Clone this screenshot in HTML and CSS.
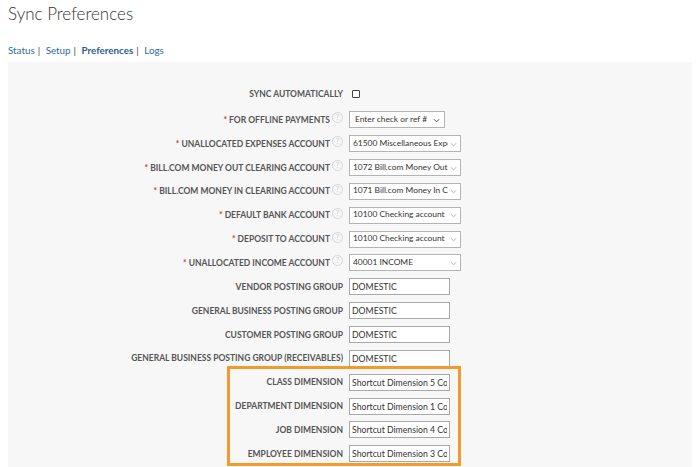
FILE: index.html
```html
<!DOCTYPE html>
<html>
<head>
<meta charset="utf-8">
<link rel="stylesheet" href="styles.css">
</head>
<body>
<h1 class="title">Sync Preferences</h1>
<nav class="tabs">
  <a href="#">Status</a><span class="sep">|</span>
  <a href="#">Setup</a><span class="sep">|</span>
  <a href="#" class="active">Preferences</a><span class="sep">|</span>
  <a href="#">Logs</a>
</nav>
<div class="panel">
  <div class="row first">
    <label class="lbl">SYNC AUTOMATICALLY</label>
    <div class="ctl"><input type="checkbox" class="check"></div>
  </div>
  <div class="row">
    <label class="lbl"><span class="req">*</span>FOR OFFLINE PAYMENTS<span class="help">?</span></label>
    <div class="ctl"><span class="sel narrow"><select><option>Enter check or ref #</option></select><svg class="chev dark" viewBox="0 0 8 5"><path d="M1 1l3 3 3-3" fill="none" stroke="currentColor" stroke-width="1"/></svg></span></div>
  </div>
  <div class="row">
    <label class="lbl"><span class="req">*</span>UNALLOCATED EXPENSES ACCOUNT<span class="help">?</span></label>
    <div class="ctl"><span class="sel"><select><option>61500 Miscellaneous Expenses</option></select><svg class="chev" viewBox="0 0 8 5"><path d="M1 1l3 3 3-3" fill="none" stroke="currentColor" stroke-width="1"/></svg></span></div>
  </div>
  <div class="row">
    <label class="lbl"><span class="req">*</span>BILL.COM MONEY OUT CLEARING ACCOUNT<span class="help">?</span></label>
    <div class="ctl"><span class="sel"><select><option>1072 Bill.com Money Out Clearing</option></select><svg class="chev" viewBox="0 0 8 5"><path d="M1 1l3 3 3-3" fill="none" stroke="currentColor" stroke-width="1"/></svg></span></div>
  </div>
  <div class="row">
    <label class="lbl"><span class="req">*</span>BILL.COM MONEY IN CLEARING ACCOUNT<span class="help">?</span></label>
    <div class="ctl"><span class="sel"><select><option>1071 Bill.com Money In Clearing</option></select><svg class="chev" viewBox="0 0 8 5"><path d="M1 1l3 3 3-3" fill="none" stroke="currentColor" stroke-width="1"/></svg></span></div>
  </div>
  <div class="row">
    <label class="lbl"><span class="req">*</span>DEFAULT BANK ACCOUNT<span class="help">?</span></label>
    <div class="ctl"><span class="sel"><select><option>10100 Checking account</option></select><svg class="chev" viewBox="0 0 8 5"><path d="M1 1l3 3 3-3" fill="none" stroke="currentColor" stroke-width="1"/></svg></span></div>
  </div>
  <div class="row">
    <label class="lbl"><span class="req">*</span>DEPOSIT TO ACCOUNT<span class="help">?</span></label>
    <div class="ctl"><span class="sel"><select><option>10100 Checking account</option></select><svg class="chev" viewBox="0 0 8 5"><path d="M1 1l3 3 3-3" fill="none" stroke="currentColor" stroke-width="1"/></svg></span></div>
  </div>
  <div class="row">
    <label class="lbl"><span class="req">*</span>UNALLOCATED INCOME ACCOUNT<span class="help">?</span></label>
    <div class="ctl"><span class="sel"><select><option>40001 INCOME</option></select><svg class="chev" viewBox="0 0 8 5"><path d="M1 1l3 3 3-3" fill="none" stroke="currentColor" stroke-width="1"/></svg></span></div>
  </div>
  <div class="row">
    <label class="lbl">VENDOR POSTING GROUP</label>
    <div class="ctl"><input class="txt" type="text" value="DOMESTIC"></div>
  </div>
  <div class="row">
    <label class="lbl">GENERAL BUSINESS POSTING GROUP</label>
    <div class="ctl"><input class="txt" type="text" value="DOMESTIC"></div>
  </div>
  <div class="row">
    <label class="lbl">CUSTOMER POSTING GROUP</label>
    <div class="ctl"><input class="txt" type="text" value="DOMESTIC"></div>
  </div>
  <div class="row">
    <label class="lbl">GENERAL BUSINESS POSTING GROUP (RECEIVABLES)</label>
    <div class="ctl"><input class="txt" type="text" value="DOMESTIC"></div>
  </div>
  <div class="dims">
    <div class="row">
      <label class="lbl">CLASS DIMENSION</label>
      <div class="ctl"><input class="txt" type="text" value="Shortcut Dimension 5 Code"></div>
    </div>
    <div class="row">
      <label class="lbl">DEPARTMENT DIMENSION</label>
      <div class="ctl"><input class="txt" type="text" value="Shortcut Dimension 1 Code"></div>
    </div>
    <div class="row">
      <label class="lbl">JOB DIMENSION</label>
      <div class="ctl"><input class="txt" type="text" value="Shortcut Dimension 4 Code"></div>
    </div>
    <div class="row">
      <label class="lbl">EMPLOYEE DIMENSION</label>
      <div class="ctl"><input class="txt" type="text" value="Shortcut Dimension 3 Code"></div>
    </div>
  </div>
</div>
</body>
</html>
```
FILE: styles.css
```css
html, body {
  margin: 0;
  padding: 0;
  background: #ffffff;
  font-family: Lato, "Open Sans", "Liberation Sans", sans-serif;
  overflow: hidden;
}
body {
  padding: 0 8px;
  height: 467px;
  box-sizing: border-box;
}
.title {
  margin: 0;
  padding-top: 3px;
  font-size: 17px;
  line-height: 22px;
  font-weight: 300;
  color: #333333;
}
.tabs {
  margin-top: 18px;
  font-size: 9.8px;
  line-height: 14px;
  height: 14px;
  color: #555555;
}
.tabs a {
  color: #2f6aa0;
  text-decoration: none;
}
.tabs a.active {
  font-weight: 700;
  color: #2a5f91;
}
.tabs .sep {
  margin: 0 3px 0 3px;
  color: #444;
}
.panel {
  margin-top: 5px;
  background: #f7f7f7;
  padding-top: 20px;
  height: 420px;
  box-sizing: border-box;
}
.row {
  display: grid;
  grid-template-columns: 335px auto;
  column-gap: 6px;
  align-items: center;
  height: 23.85px;
}
.row.first {
  height: 24px;
  margin-bottom: 2px;
}
.lbl {
  text-align: right;
  font-size: 8.5px;
  font-weight: 700;
  color: #555555;
  white-space: nowrap;
  display: flex;
  justify-content: flex-end;
  align-items: center;
}
.req {
  color: #e0312b;
  margin-right: 2px;
}
.help {
  display: inline-block;
  width: 9px;
  height: 9px;
  border: 1px solid #d6d6d6;
  border-radius: 50%;
  color: #d0d0d0;
  font-size: 7px;
  line-height: 9px;
  text-align: center;
  font-weight: 400;
  margin-left: 2px;
  margin-top: -4px;
}
.ctl {
  display: flex;
  align-items: center;
}
.check {
  -webkit-appearance: none;
  appearance: none;
  margin: 0 0 0 3px;
  width: 8px;
  height: 8px;
  border: 1px solid #444;
  background: #fff;
  border-radius: 1px;
}
.sel {
  position: relative;
  display: inline-block;
  width: 112px;
  height: 17px;
}
.sel.narrow {
  width: 96px;
}
.sel select {
  -webkit-appearance: none;
  appearance: none;
  display: block;
  width: 100%;
  height: 17px;
  box-sizing: border-box;
  border: 1px solid #b4b4b4;
  border-radius: 0;
  background: #ffffff;
  font-family: Lato, "Open Sans", "Liberation Sans", sans-serif;
  font-size: 8.4px;
  line-height: 13px;
  color: #333333;
  padding: 0 12px 1px 3px;
  margin: 0;
  outline: none;
}
.sel.narrow select {
  padding-left: 5px;
}
.chev {
  position: absolute;
  right: 4px;
  top: 6.5px;
  width: 7px;
  height: 5px;
  color: #a8a8a8;
}
.chev.dark {
  color: #444444;
  right: 5px;
}
.txt {
  width: 101px;
  height: 17px;
  box-sizing: border-box;
  border: 1px solid #a8a8a8;
  border-radius: 0;
  background: #ffffff;
  font-family: Lato, "Open Sans", "Liberation Sans", sans-serif;
  font-size: 8.7px;
  color: #333333;
  padding: 0 2px;
  margin: 0;
  outline: none;
}
.dims {
  position: relative;
}
.dims::after {
  content: "";
  position: absolute;
  left: 219px;
  top: -4px;
  width: 234px;
  height: 100px;
  box-sizing: border-box;
  border: 3px solid #f39a2f;
  pointer-events: none;
}
```
